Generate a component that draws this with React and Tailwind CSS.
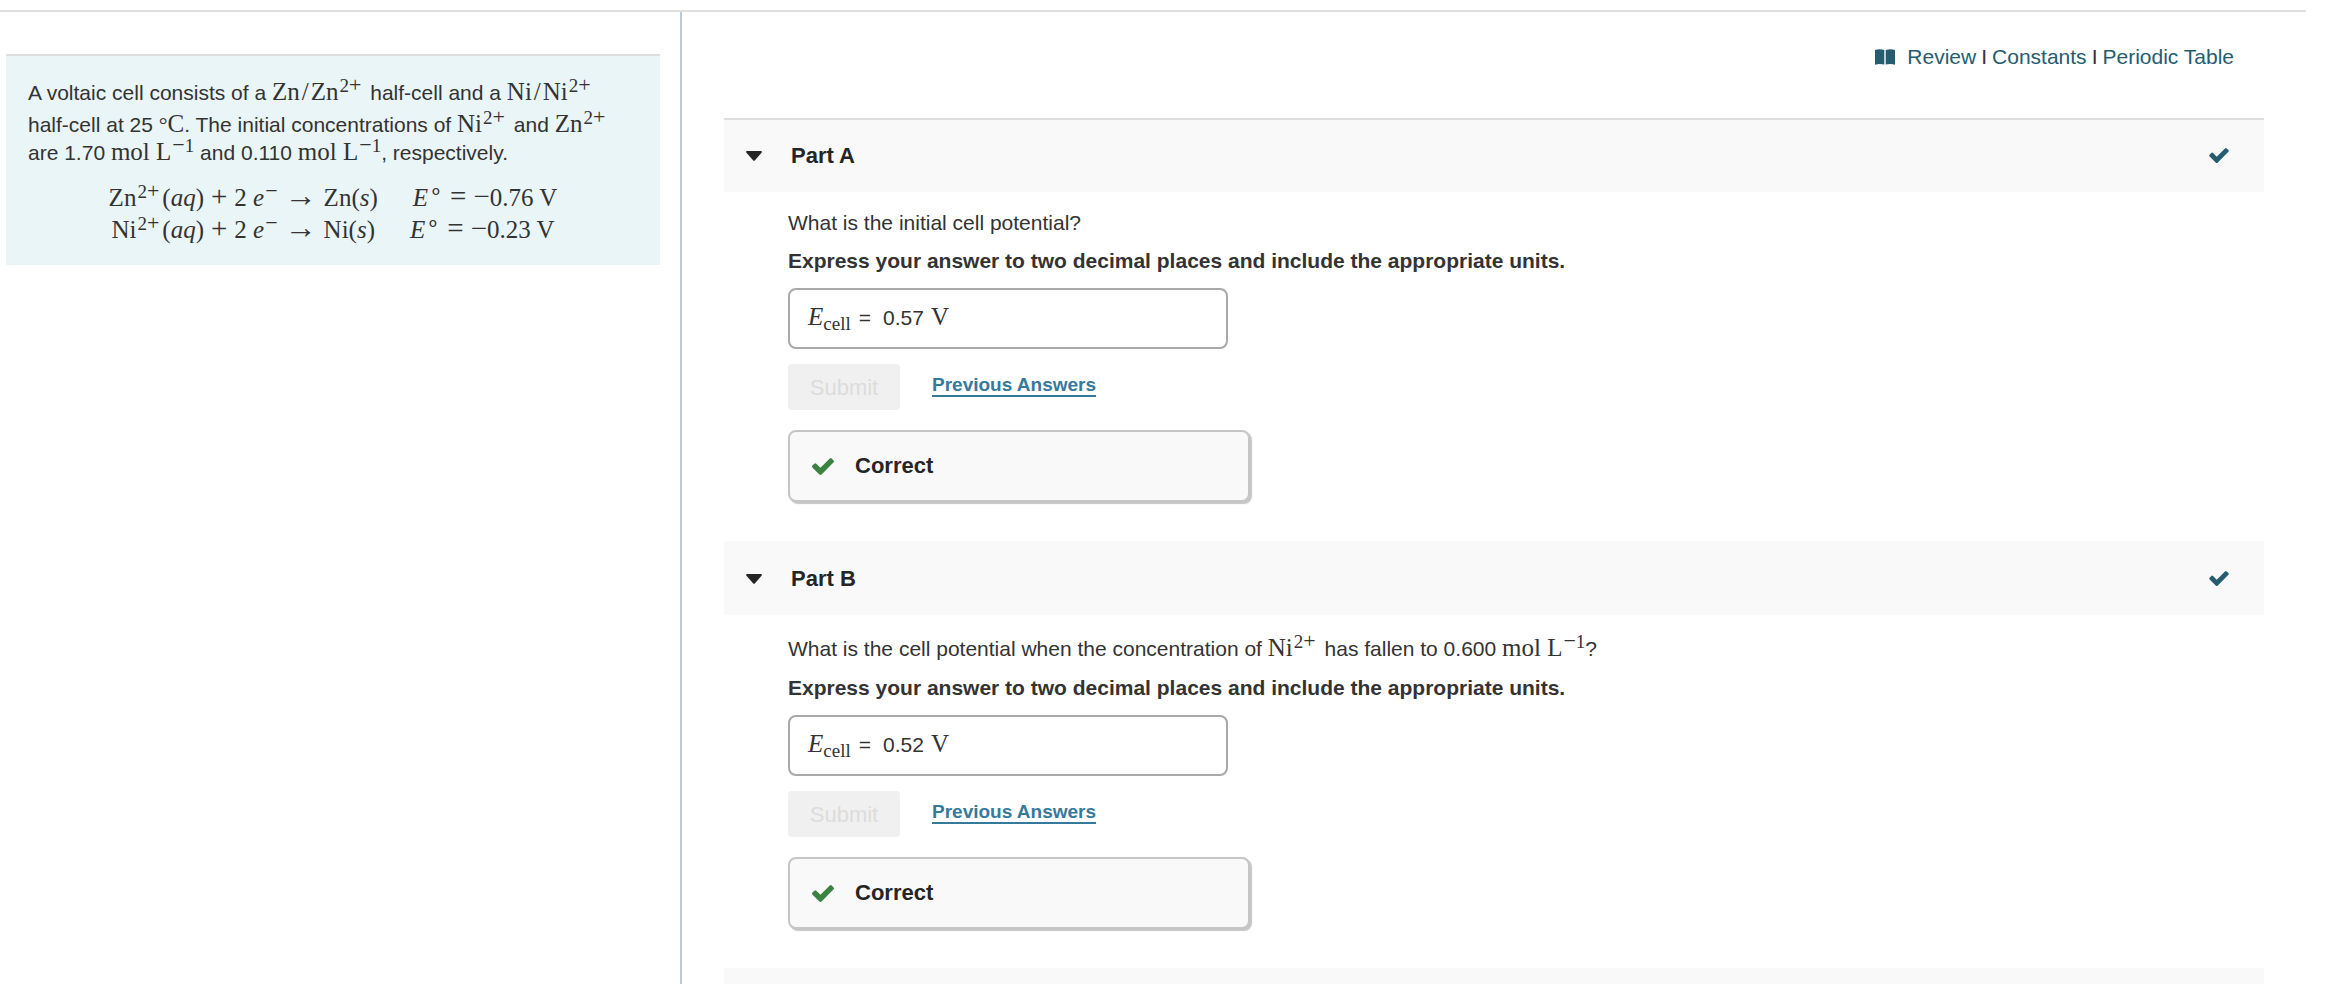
import React, { useState } from 'react';

const CheckIcon = ({ className }) => (
    <svg viewBox="121 330 1550 1192" className={className} fill="currentColor" aria-hidden="true">
        <path d="M1671 566q0 40-28 68l-724 724-136 136q-28 28-68 28t-68-28l-136-136-362-362q-28-28-28-68t28-68l136-136q28-28 68-28t68 28l294 295 656-657q28-28 68-28t68 28l136 136q28 28 28 68z" />
    </svg>
);

const BookIcon = () => (
    <svg viewBox="0 0 20 16" className="w-5 h-4 mr-3" fill="currentColor" aria-hidden="true">
        <path d="M0 1Q4.500 -.7 9.300 1V15.500Q4.500 14.200 0 15.700Z" />
        <path d="M10.700 1Q15.500 -.7 20 1V15.700Q15.500 14.200 10.700 15.500Z" />
    </svg>
);

const Tex = ({ children }) => (
    <span className="font-['Liberation_Serif',serif] text-[25px] whitespace-nowrap">{children}</span>
);

const Sup = ({ children }) => <sup className="text-[19px] -top-[8px] pl-px">{children}</sup>;

// Operators are set larger than the letters around them
const Op = ({ children }) => <span className="text-[29px] leading-[0]">{children}</span>;
const SupOp = ({ children }) => <span className="text-[22px] leading-[0]">{children}</span>;

const Charge = () => <Sup>2<SupOp>+</SupOp></Sup>;

const Ion = ({ symbol }) => (
    <span className="mr-[3px]"><Tex>{symbol}<Charge /></Tex></span>
);

const MolPerLitre = () => <Tex>mol L<Sup><SupOp>−</SupOp>1</Sup></Tex>;

const HalfReaction = ({ metal, potential }) => (
    <div className="flex justify-center items-baseline gap-[7px] font-['Liberation_Serif',serif] text-[25px] leading-[32px] whitespace-nowrap">
        <span>{metal}<Charge /><span className="ml-[3px]">(<i>aq</i>)</span></span>
        <Op>+</Op>
        <span>2 <i>e</i><Sup><SupOp>−</SupOp></Sup></span>
        <span className="text-[32px] leading-[0]">→</span>
        <span>{metal}(<i>s</i>)</span>
        <span className="ml-7"><i>E</i><Sup><SupOp>∘</SupOp></Sup></span>
        <Op>=</Op>
        <span><Op>−</Op>{potential} V</span>
    </div>
);

const Part = ({ name, first, question, answer }) => {
    const [open, setOpen] = useState(true);
    const inputId = `answer-${name}`;

    return (
        <section>
            <button
                type="button"
                onClick={() => setOpen(!open)}
                aria-expanded={open}
                className={`flex items-center w-full h-[74px] pl-[22px] pr-[35px] pb-px bg-[#f9f9f9] text-[#252525] border-t-2 ${first ? 'border-[#dedede]' : 'border-[#f9f9f9]'}`}
            >
                <svg viewBox="0 0 16 10" className="w-4 h-[10px]" fill="currentColor" aria-hidden="true">
                    <path d="M1 0H15Q16.500 .4 15.500 1.700L9 9.300Q8 10.400 7 9.300L.5 1.700Q-.5 .4 1 0Z" />
                </svg>
                <span className="ml-[29px] text-[22px] font-bold">Part {name}</span>
                <CheckIcon className="w-5 h-[15px] ml-auto text-[#255c70]" />
            </button>

            {open && (
                <div className="pt-[19px] pl-16 pb-[39px]">
                    <p>{question}</p>
                    <p className="mt-[14px] font-bold">
                        Express your answer to two decimal places and include the appropriate units.
                    </p>

                    <div className="flex items-baseline w-[440px] h-[61px] mt-[15px] pt-[15px] pl-[18px] border-2 border-[#a9a9a9] rounded-lg">
                        <label htmlFor={inputId} className="whitespace-nowrap">
                            <Tex><i>E</i><sub className="text-[19px]">cell</sub></Tex>
                            <span className="ml-2">=</span>
                        </label>
                        <input id={inputId} readOnly defaultValue={answer} className="w-[41px] ml-3 outline-none" />
                        <span className="ml-[7px]"><Tex>V</Tex></span>
                    </div>

                    <div className="flex items-start mt-[15px]">
                        <button type="button" disabled className="w-28 h-[46px] pt-[2px] rounded bg-[#f0f0f0] text-[22px] text-[#dcdcdc]">
                            Submit
                        </button>
                        <a href="#" className="ml-8 mt-[11px] text-[19px] font-bold text-[#357a9b] border-b-2 border-[#357a9b] leading-[20px]">
                            Previous Answers
                        </a>
                    </div>

                    <div className="flex items-center w-[462px] h-[72px] mt-5 pl-[22px] bg-[#f9f9f9] border-2 border-[#c6c6c6] rounded-lg shadow-[2px_2px_1px_#c6c6c6]">
                        <CheckIcon className="w-[22px] h-[17px] text-[#3a8340]" />
                        <span className="ml-[21px] text-[22px] font-bold text-[#252525]">Correct</span>
                    </div>
                </div>
            )}
        </section>
    );
};

const App = () => {
    return (
        <div className="h-screen overflow-hidden flex flex-col pt-[10px] bg-white font-['Liberation_Sans',Arial,sans-serif] text-[21px] leading-[24px] text-[#333]">
            <div className="mr-[38px] border-t-2 border-[#dfdfdf]" />
            <main className="flex flex-1 min-h-0">
                {/* Problem statement */}
                <aside className="w-[682px] shrink-0 border-r-2 border-[#bccadb] pt-[42px] pl-[6px] pr-5">
                    <div className="border-t-2 border-[#dedede] bg-[#eaf5f7] pt-[20px] px-[22px] pb-[19px]">
                        <p>
                            <span className="leading-[31px]">
                                A voltaic cell consists of a <Tex>Zn<span className="mx-[2px]">/</span></Tex><Ion symbol="Zn" />{' '}
                                half-cell and a <Tex>Ni<span className="mx-[2px]">/</span></Tex><Ion symbol="Ni" />
                                <br />
                                half-cell at 25 <Tex><SupOp>°</SupOp>C</Tex>. The initial concentrations of <Ion symbol="Ni" /> and <Ion symbol="Zn" />
                            </span>
                            <br />
                            are 1.70 <MolPerLitre /> and 0.110 <MolPerLitre />, respectively.
                        </p>
                        <div className="mt-[17px]">
                            <HalfReaction metal="Zn" potential="0.76" />
                            <HalfReaction metal="Ni" potential="0.23" />
                        </div>
                    </div>
                </aside>

                <div className="flex-1 min-w-0 pl-[42px] pr-20">
                    <nav className="flex justify-end items-center pt-[33px] pr-[30px] pb-[49px]">
                        <a href="#" className="flex items-center text-[#255c70]"><BookIcon />Review</a>
                        <span className="mx-[5px]">I</span>
                        <a href="#" className="text-[#255c70]">Constants</a>
                        <span className="mx-[5px]">I</span>
                        <a href="#" className="text-[#255c70]">Periodic Table</a>
                    </nav>

                    <Part name="A" first question="What is the initial cell potential?" answer="0.57" />
                    <Part
                        name="B"
                        answer="0.52"
                        question={
                            <span className="leading-[27px]">
                                What is the cell potential when the concentration of <Ion symbol="Ni" /> has fallen to 0.600 <MolPerLitre />?
                            </span>
                        }
                    />
                    <div className="h-[74px] bg-[#f9f9f9]" />
                </div>
            </main>
        </div>
    );
};

export default App;
